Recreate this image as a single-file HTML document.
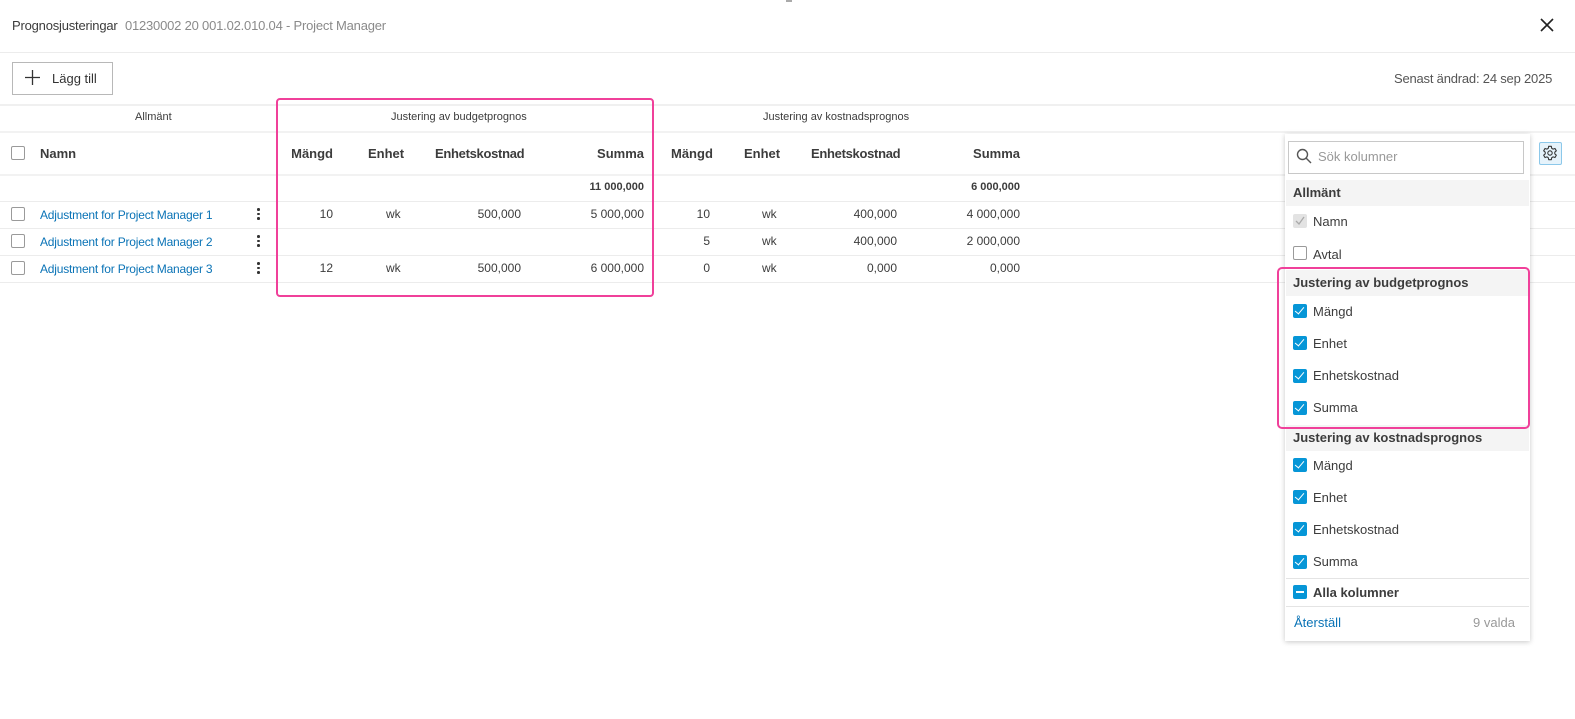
<!DOCTYPE html>
<html><head><meta charset="utf-8"><style>
body{margin:0;width:1575px;height:719px;background:#fff;font-family:"Liberation Sans",sans-serif;color:#3c3c3c;position:relative;overflow:hidden;font-size:12px}
.a{position:absolute;white-space:nowrap}
.hl{position:absolute;left:0;width:1575px;height:1px;background:#ececec}
.cb{position:absolute;width:12px;height:12px;border:1px solid #9a9a9a;border-radius:2px;background:#fff}
.ck{position:absolute;width:14px;height:14px;background:#0696d7;border-radius:2px}
.ck:after{content:"";position:absolute;left:4px;top:1px;width:4px;height:8px;border:solid #fff;border-width:0 1.5px 1.5px 0;transform:rotate(40deg)}
.r{text-align:right}
.b{font-weight:bold;color:#3c3c3c}
.lnk{color:#0a73b6;letter-spacing:-0.2px}
.dots{position:absolute;width:3px}
.dots i{display:block;width:2.5px;height:2.5px;background:#333;border-radius:50%;margin-bottom:2px}
.pi{font-size:13px;color:#3c3c3c}
.sec{position:absolute;left:1286px;width:243px;height:26px;background:#f4f4f4}
</style></head><body>
<div class="a" style="left:786px;top:0;width:6px;height:2px;background:#aaa"></div>
<div class="a" style="left:12px;top:18px;font-size:13px;color:#3c3c3c;letter-spacing:-0.2px">Prognosjusteringar <span style="color:#8a8a8a;margin-left:4px">01230002 20 001.02.010.04 - Project Manager</span></div>
<svg class="a" style="left:1540px;top:18px" width="14" height="14"><path d="M1 1L13 13M13 1L1 13" stroke="#222" stroke-width="1.6"/></svg>
<div class="hl" style="top:52px"></div>
<div class="a" style="left:12px;top:62px;width:99px;height:31px;border:1px solid #b8b8b8"></div>
<svg class="a" style="left:25px;top:70px" width="15" height="15"><path d="M7.5 0V15M0 7.5H15" stroke="#333" stroke-width="1.3"/></svg>
<div class="a" style="left:52px;top:71px;font-size:13px;color:#333">Lägg till</div>
<div class="a" style="left:1394px;top:71px;font-size:13px;color:#555;letter-spacing:-0.2px">Senast ändrad: 24 sep 2025</div>
<div class="hl" style="top:104px;height:2px;background:#f0f0f0"></div>
<div class="a" style="left:135px;top:111px;font-size:11px">Allmänt</div>
<div class="a" style="left:391px;top:111px;font-size:11px">Justering av budgetprognos</div>
<div class="a" style="left:763px;top:111px;font-size:11px">Justering av kostnadsprognos</div>
<div class="hl" style="top:131px;height:2px;background:#f2f2f2"></div>
<div class="cb" style="left:11px;top:146px"></div>
<div class="a b" style="left:40px;top:146px;font-size:13px">Namn</div>
<div class="a b r" style="left:253px;width:80px;top:146px;font-size:13px">Mängd</div>
<div class="a b" style="left:368px;top:146px;font-size:13px">Enhet</div>
<div class="a b" style="left:435px;top:146px;font-size:13px;letter-spacing:-0.3px">Enhetskostnad</div>
<div class="a b r" style="left:544px;width:100px;top:146px;font-size:13px">Summa</div>
<div class="a b" style="left:671px;top:146px;font-size:13px">Mängd</div>
<div class="a b" style="left:744px;top:146px;font-size:13px">Enhet</div>
<div class="a b" style="left:811px;top:146px;font-size:13px;letter-spacing:-0.3px">Enhetskostnad</div>
<div class="a b r" style="left:920px;width:100px;top:146px;font-size:13px">Summa</div>
<div class="hl" style="top:174px;height:2px;background:#f2f2f2"></div>
<div class="a b r" style="left:544px;width:100px;top:181px;font-size:11px">11 000,000</div>
<div class="a b r" style="left:920px;width:100px;top:181px;font-size:11px">6 000,000</div>
<div class="hl" style="top:201px"></div>
<div class="hl" style="top:228px"></div>
<div class="hl" style="top:255px"></div>
<div class="hl" style="top:282px"></div>
<div class="cb" style="left:11px;top:207px"></div><div class="cb" style="left:11px;top:234px"></div><div class="cb" style="left:11px;top:261px"></div>
<div class="a lnk" style="left:40px;top:208px">Adjustment for Project Manager 1</div>
<div class="a lnk" style="left:40px;top:235px">Adjustment for Project Manager 2</div>
<div class="a lnk" style="left:40px;top:262px">Adjustment for Project Manager 3</div>
<div class="dots" style="left:257px;top:208px"><i></i><i></i><i></i></div>
<div class="dots" style="left:257px;top:235px"><i></i><i></i><i></i></div>
<div class="dots" style="left:257px;top:262px"><i></i><i></i><i></i></div>
<div class="a r" style="left:283px;width:50px;top:207px">10</div>
<div class="a" style="left:386px;top:207px">wk</div>
<div class="a r" style="left:421px;width:100px;top:207px">500,000</div>
<div class="a r" style="left:544px;width:100px;top:207px">5 000,000</div>
<div class="a r" style="left:660px;width:50px;top:207px">10</div>
<div class="a" style="left:762px;top:207px">wk</div>
<div class="a r" style="left:797px;width:100px;top:207px">400,000</div>
<div class="a r" style="left:920px;width:100px;top:207px">4 000,000</div>
<div class="a r" style="left:660px;width:50px;top:234px">5</div>
<div class="a" style="left:762px;top:234px">wk</div>
<div class="a r" style="left:797px;width:100px;top:234px">400,000</div>
<div class="a r" style="left:920px;width:100px;top:234px">2 000,000</div>
<div class="a r" style="left:283px;width:50px;top:261px">12</div>
<div class="a" style="left:386px;top:261px">wk</div>
<div class="a r" style="left:421px;width:100px;top:261px">500,000</div>
<div class="a r" style="left:544px;width:100px;top:261px">6 000,000</div>
<div class="a r" style="left:660px;width:50px;top:261px">0</div>
<div class="a" style="left:762px;top:261px">wk</div>
<div class="a r" style="left:797px;width:100px;top:261px">0,000</div>
<div class="a r" style="left:920px;width:100px;top:261px">0,000</div>
<div class="a" style="left:276px;top:98px;width:374px;height:195px;border:2px solid #f0409a;border-radius:4px"></div>
<div class="a" style="left:1539px;top:142px;width:21px;height:21px;border:1px solid #8cc8ea;background:#e6f3fb;border-radius:2px"></div>
<svg class="a" style="left:1542px;top:145px" width="16" height="16" viewBox="0 0 24 24"><path d="M10 2h4l.6 3 2 1.2 2.9-1 2 3.5-2.3 2v2.6l2.3 2-2 3.5-2.9-1-2 1.2-.6 3h-4l-.6-3-2-1.2-2.9 1-2-3.5 2.3-2v-2.6l-2.3-2 2-3.5 2.9 1 2-1.2z" fill="none" stroke="#333" stroke-width="1.6" stroke-linejoin="round"/><circle cx="12" cy="12" r="3.3" fill="none" stroke="#333" stroke-width="1.6"/></svg>
<div class="a" style="left:1285px;top:134px;width:245px;height:507px;background:#fff;box-shadow:0 1px 5px rgba(0,0,0,.22)"></div>
<div class="a" style="left:1288px;top:141px;width:234px;height:31px;border:1px solid #c8c8c8"></div>
<svg class="a" style="left:1296px;top:148px" width="16" height="16"><circle cx="6.5" cy="6.5" r="5" fill="none" stroke="#555" stroke-width="1.4"/><path d="M10 10L15 15" stroke="#555" stroke-width="1.4"/></svg>
<div class="a" style="left:1318px;top:149px;font-size:13px;color:#999">Sök kolumner</div>
<div class="sec" style="top:180px"></div>
<div class="a b pi" style="left:1293px;top:185px">Allmänt</div>
<div class="a" style="left:1293px;top:214px;width:14px;height:14px;background:#e3e3e3;border-radius:2px"></div>
<svg class="a" style="left:1295px;top:216px" width="10" height="10"><path d="M1 5L4 8L9 1" fill="none" stroke="#aaa" stroke-width="1.3"/></svg>
<div class="a pi" style="left:1313px;top:214px">Namn</div>
<div class="cb" style="left:1293px;top:246px"></div>
<div class="a pi" style="left:1313px;top:247px">Avtal</div>
<div class="sec" style="top:270px"></div>
<div class="a b pi" style="left:1293px;top:275px">Justering av budgetprognos</div>
<div class="ck" style="left:1293px;top:304px"></div><div class="a pi" style="left:1313px;top:304px">Mängd</div>
<div class="ck" style="left:1293px;top:336px"></div><div class="a pi" style="left:1313px;top:336px">Enhet</div>
<div class="ck" style="left:1293px;top:369px"></div><div class="a pi" style="left:1313px;top:368px">Enhetskostnad</div>
<div class="ck" style="left:1293px;top:401px"></div><div class="a pi" style="left:1313px;top:400px">Summa</div>
<div class="sec" style="top:425px"></div>
<div class="a b pi" style="left:1293px;top:430px">Justering av kostnadsprognos</div>
<div class="ck" style="left:1293px;top:458px"></div><div class="a pi" style="left:1313px;top:458px">Mängd</div>
<div class="ck" style="left:1293px;top:490px"></div><div class="a pi" style="left:1313px;top:490px">Enhet</div>
<div class="ck" style="left:1293px;top:522px"></div><div class="a pi" style="left:1313px;top:522px">Enhetskostnad</div>
<div class="ck" style="left:1293px;top:555px"></div><div class="a pi" style="left:1313px;top:554px">Summa</div>
<div class="a" style="left:1286px;top:578px;width:243px;height:1px;background:#e4e4e4"></div>
<div class="a" style="left:1293px;top:585px;width:14px;height:14px;background:#0696d7;border-radius:2px"></div>
<div class="a" style="left:1296px;top:591px;width:8px;height:2px;background:#fff"></div>
<div class="a b pi" style="left:1313px;top:585px">Alla kolumner</div>
<div class="a" style="left:1286px;top:606px;width:243px;height:1px;background:#e4e4e4"></div>
<div class="a pi" style="left:1294px;top:615px;color:#0a73b6">Återställ</div>
<div class="a pi" style="left:1473px;top:615px;color:#999">9 valda</div>
<div class="a" style="left:1277px;top:267px;width:249px;height:158px;border:2px solid #f0409a;border-radius:5px"></div>
</body></html>
